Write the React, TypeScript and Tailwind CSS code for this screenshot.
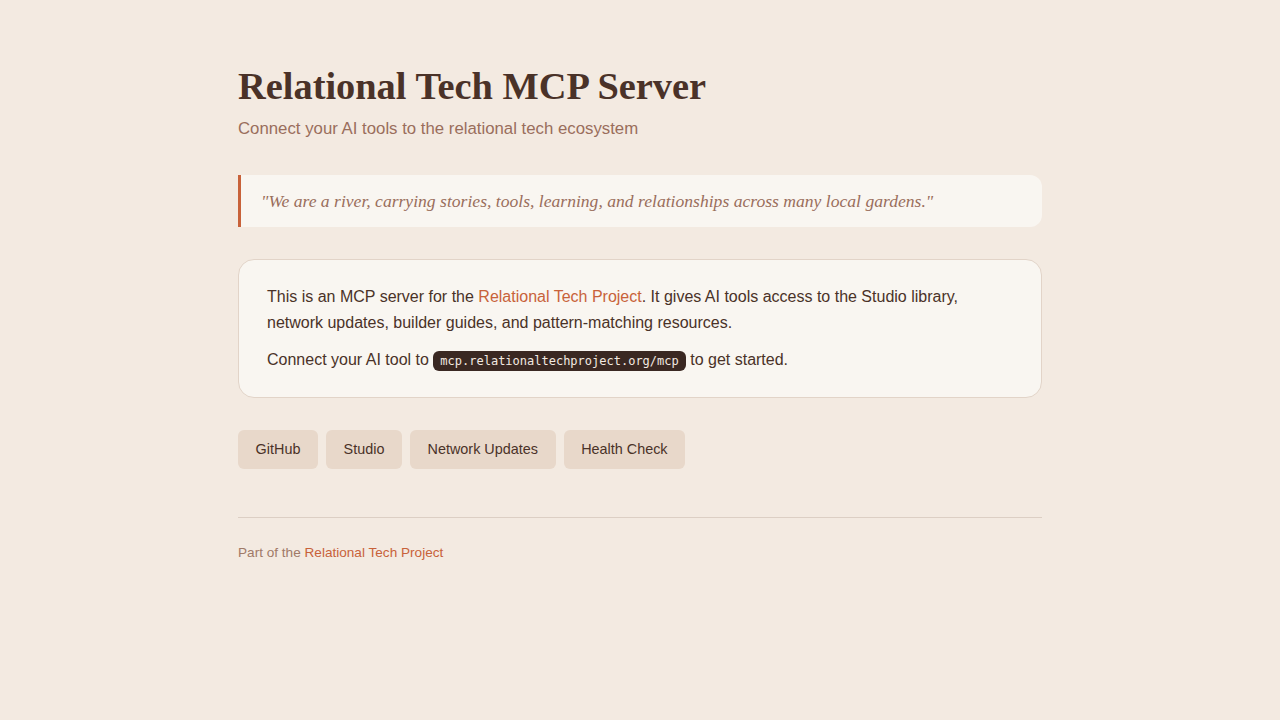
export default function App() {
  const links = ['GitHub', 'Studio', 'Network Updates', 'Health Check'];

  return (
    <div className="min-h-screen bg-[#f3eae1] font-['Liberation_Sans',Arial,sans-serif] text-[#4a3228]">
      <div className="mx-auto w-[804px] pt-[62px]">
        <h1 className="font-['Liberation_Serif','Times_New_Roman',serif] text-[38.4px] font-bold leading-[48px] text-[#4a3228]">
          Relational Tech MCP Server
        </h1>
        <p className="mt-[7px] text-[16.8px] leading-6 text-[#9a6e5c]">
          Connect your AI tools to the relational tech ecosystem
        </p>

        <blockquote className="mt-[34px] rounded-r-xl border-l-[3px] border-[#c8623a] bg-[#f9f6f1] py-[13px] pl-5 pr-4">
          <p className="font-['Liberation_Serif','Times_New_Roman',serif] text-[17.6px] italic leading-[26px] text-[#9a6e5c]">
            "We are a river, carrying stories, tools, learning, and relationships across many local gardens."
          </p>
        </blockquote>

        <div className="mt-[32px] rounded-2xl border border-[#e2d4c8] bg-[#f9f6f1] px-7 pb-[23px] pt-[24px]">
          <p className="text-base leading-[26px]">
            This is an MCP server for the{' '}
            <a href="#" className="text-[#c8623a]">Relational Tech Project</a>. It gives AI tools access to the Studio library,
            network updates, builder guides, and pattern-matching resources.
          </p>
          <p className="mt-[11px] text-base leading-[26px]">
            Connect your AI tool to{' '}
            <code className="rounded-md bg-[#3a2822] px-[7px] py-[3px] font-['DejaVu_Sans_Mono',monospace] text-[12px] text-[#f3eae1]">
              mcp.relationaltechproject.org/mcp
            </code>{' '}
            to get started.
          </p>
        </div>

        <div className="mt-8 flex gap-2">
          {links.map((l) => (
            <a
              key={l}
              href="#"
              className="rounded-md bg-[#e8d8ca] px-[17.6px] py-[10px] text-[14.4px] leading-[19px] text-[#4a3228]"
            >
              {l}
            </a>
          ))}
        </div>

        <div className="mt-12 border-t border-[#dccfc4] pt-[25px] text-[13.6px] leading-5 text-[#a07a68]">
          Part of the <a href="#" className="text-[#c8623a]">Relational Tech Project</a>
        </div>
      </div>
    </div>
  );
}
